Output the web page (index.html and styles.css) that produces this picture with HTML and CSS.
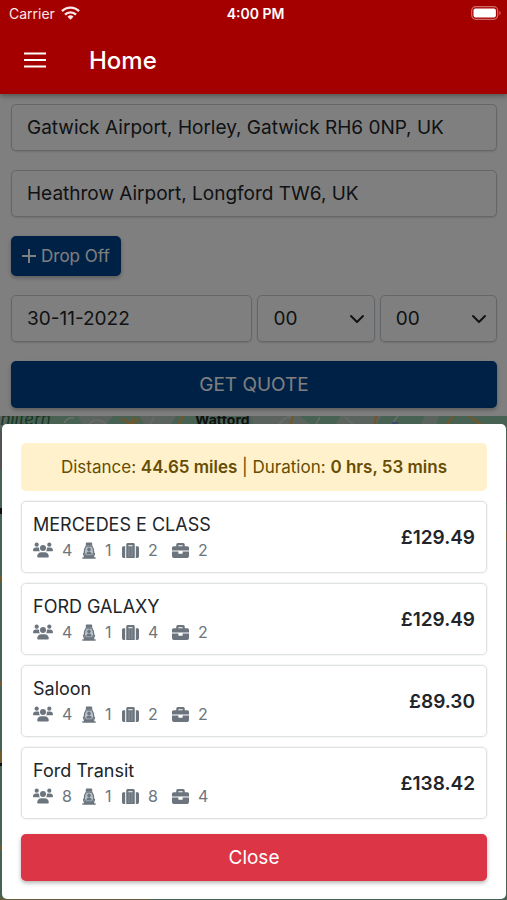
FILE: index.html
```html
<!DOCTYPE html>
<html lang="en">
<head>
<meta charset="utf-8">
<meta name="viewport" content="width=device-width, initial-scale=1">
<title>Home</title>
<link rel="stylesheet" href="styles.css">
</head>
<body>
<svg class="sprite" aria-hidden="true">
  <symbol id="users" viewBox="0 0 20 16">
    <circle cx="3.7" cy="2.7" r="2.1"/><circle cx="16.3" cy="2.7" r="2.1"/><circle cx="10" cy="6" r="3"/>
    <path d="M0 8.6C0 6.8 1.2 5.6 3 5.6h2c.5 0 .9.1 1.2.3C6 7.300 6.300 8.400 7.100 9.300H.7C.3 9.300 0 9 0 8.600z"/>
    <path d="M20 8.600c0-1.800-1.200-3-3-3h-2c-.5 0-.9.1-1.200.3.2 1.400-.1 2.500-.9 3.400h6.400c.4 0 .7-.3.7-.7z"/>
    <path d="M4.200 14.600c0-2.500 1.700-4.300 4.200-4.300h3.200c2.500 0 4.200 1.800 4.200 4.300 0 .5-.4.9-.9.9H5.100c-.5 0-.9-.4-.9-.9z"/>
  </symbol>
  <symbol id="seat" viewBox="0 0 14 17">
    <path d="M3.800 1.800c0-.8.5-1.300 1.200-1.300h4c.7 0 1.200.5 1.200 1.300v2H3.800z"/>
    <path d="M4.200 4.200h5.600c1.300 1.700 2 4 2 6.600l-1.600 3H3.800l-1.600-3c0-2.600.7-4.900 2-6.600z" fill="#b4c0ca" stroke="currentColor" stroke-width="1.200"/>
    <circle cx="7" cy="7.400" r="1.800"/>
    <path d="M4.300 12.400c0-2 1-3 2.700-3s2.700 1 2.700 3z"/>
    <path d="M1.500 11.500l1 3h9l1-3M.8 16h12.400" fill="none" stroke="currentColor" stroke-width="1.300" stroke-linecap="round"/>
  </symbol>
  <symbol id="suitcase" viewBox="0 0 512 512">
    <path d="M128 480h256V80c0-26.500-21.500-48-48-48H176c-26.500 0-48 21.500-48 48v400zm64-384h128v32H192V96zm320 80v256c0 26.500-21.500 48-48 48h-48V128h48c26.500 0 48 21.500 48 48zM96 480H48c-26.500 0-48-21.500-48-48V176c0-26.500 21.500-48 48-48h48v352z"/>
    <path d="M212 160v290M300 160v290" stroke="#a9b0b6" stroke-width="16"/>
  </symbol>
  <symbol id="briefcase" viewBox="0 0 512 512">
    <path d="M320 336c0 8.840-7.160 16-16 16h-96c-8.840 0-16-7.160-16-16v-48H0v144c0 25.600 22.400 48 48 48h416c25.600 0 48-22.400 48-48V288H320v48zm144-208h-80V80c0-25.600-22.400-48-48-48H176c-25.600 0-48 22.400-48 48v48H48c-25.600 0-48 22.400-48 48v80h512v-80c0-25.600-22.400-48-48-48zm-144 0H192V96h128v32z"/>
  </symbol>
  <symbol id="chevron" viewBox="0 0 16 16">
    <path d="M2 5l6 6 6-6" fill="none" stroke="currentColor" stroke-width="2" stroke-linecap="round" stroke-linejoin="round"/>
  </symbol>
</svg>

<header class="header">
  <div class="status">
    <span class="carrier">Carrier
      <svg width="19" height="14" viewBox="0 0 19 14" aria-hidden="true"><g fill="none" stroke="currentColor" stroke-width="2.400"><path d="M1 5.200a12 12 0 0 1 17 0"/><path d="M4 8.600a7.800 7.800 0 0 1 11 0"/></g><path d="M9.500 13.800l-3-3.100a4.300 4.300 0 0 1 6 0z" fill="currentColor"/></svg>
    </span>
    <time class="clock">4:00 PM</time>
    <svg class="battery" width="31" height="14" viewBox="0 0 31 14" aria-hidden="true"><rect x=".7" y=".7" width="26" height="12.600" rx="4" fill="none" stroke="#d06a6a" stroke-width="1.200"/><rect x="2.500" y="2.500" width="22.400" height="9" rx="2" fill="#fff"/><path d="M28.300 4.800c1.800.7 1.800 3.700 0 4.400z" fill="#d06a6a"/></svg>
  </div>
  <div class="toolbar">
    <button class="menu" type="button" aria-label="Menu"><svg width="24" height="16" viewBox="0 0 24 16"><path d="M1 1.500h22M1 8h22M1 14.500h22" stroke="currentColor" stroke-width="2.200"/></svg></button>
    <h1>Home</h1>
  </div>
</header>

<main class="stage">
  <form class="booking">
    <input class="field" type="text" aria-label="Pick up" value="Gatwick Airport, Horley, Gatwick RH6 0NP, UK">
    <input class="field" type="text" aria-label="Destination" value="Heathrow Airport, Longford TW6, UK">
    <button class="btn drop" type="button"><svg width="14" height="14" viewBox="0 0 14 14" aria-hidden="true"><path d="M7 0v14M0 7h14" stroke="currentColor" stroke-width="2"/></svg>Drop Off</button>
    <div class="when">
      <input class="field" type="text" aria-label="Date" value="30-11-2022">
      <div class="pick"><select class="field" aria-label="Hour"><option>00</option></select><svg width="16" height="16"><use href="#chevron"/></svg></div>
      <div class="pick"><select class="field" aria-label="Minute"><option>00</option></select><svg width="16" height="16"><use href="#chevron"/></svg></div>
    </div>
    <button class="btn quote" type="button">GET QUOTE</button>
  </form>
  <div class="map">
    <svg width="100%" height="100%" viewBox="0 0 507 484" preserveAspectRatio="xMidYMin slice" role="img" aria-label="Map">
      <rect width="507" height="484" fill="#8fc4a4"/>
      <g fill="#b4c6bb"><path d="M78 0h35l-8 10H82zM140 0h36l-6 10h-25zM250 0h50l12 10h-58zM340 0h42l-7 10h-40zM425 0h14l-3 10h-16z"/></g>
      <path d="M64 7q4-6 10-5M88 10q8-12 20 0M150 9l4-8M278 10q6-10 14-9M315 10l5-9M345 1l10 9M392 8l6-8" fill="none" stroke="#d0dad3" stroke-width="1.500"/>
      <path d="M121 2l10 6 9-5M130 10l4-9M178 10l5-10M290 10l3-10M374 10l2-10M446 10l8-11M469 0l14 10" fill="none" stroke="#dfae5c" stroke-width="2.500"/>
      <path d="M392 6h6v3h-6z" fill="#7c8fd8"/>
      <path d="M0 0h8l-4 12H0z" fill="#b5c9be"/>
      <path d="M0 15v38M507 45v40" stroke="#aaa0b0" stroke-width="6"/>
      <path d="M0 92v6M0 340v10" stroke="#222" stroke-width="4"/>
      <path d="M0 160v6M0 265v5M0 335v12M507 115v10M0 430v4" stroke="#e6b35c" stroke-width="5"/>
      <path d="M0 484h150" stroke="#c9bd80" stroke-width="5"/>
      <text class="region" x="-12" y="9">Chiltern</text>
      <text class="town" x="195" y="9">Watford</text>
    </svg>
  </div>
  <div class="backdrop"></div>

  <section class="sheet" role="dialog" aria-label="Quotes">
    <p class="summary">Distance: <b>44.65 miles</b> | Duration: <b>0 hrs, 53 mins</b></p>
    <ul class="cars">
      <li class="car">
        <div><h2>MERCEDES E CLASS</h2>
          <div class="specs"><svg class="i-users"><use href="#users"/></svg><span>4</span><svg class="i-seat"><use href="#seat"/></svg><span>1</span><svg class="i-case"><use href="#suitcase"/></svg><span>2</span><svg class="i-brief"><use href="#briefcase"/></svg><span>2</span></div></div>
        <strong>£129.49</strong>
      </li>
      <li class="car">
        <div><h2>FORD GALAXY</h2>
          <div class="specs"><svg class="i-users"><use href="#users"/></svg><span>4</span><svg class="i-seat"><use href="#seat"/></svg><span>1</span><svg class="i-case"><use href="#suitcase"/></svg><span>4</span><svg class="i-brief"><use href="#briefcase"/></svg><span>2</span></div></div>
        <strong>£129.49</strong>
      </li>
      <li class="car">
        <div><h2>Saloon</h2>
          <div class="specs"><svg class="i-users"><use href="#users"/></svg><span>4</span><svg class="i-seat"><use href="#seat"/></svg><span>1</span><svg class="i-case"><use href="#suitcase"/></svg><span>2</span><svg class="i-brief"><use href="#briefcase"/></svg><span>2</span></div></div>
        <strong>£89.30</strong>
      </li>
      <li class="car">
        <div><h2>Ford Transit</h2>
          <div class="specs"><svg class="i-users"><use href="#users"/></svg><span>8</span><svg class="i-seat"><use href="#seat"/></svg><span>1</span><svg class="i-case"><use href="#suitcase"/></svg><span>8</span><svg class="i-brief"><use href="#briefcase"/></svg><span>4</span></div></div>
        <strong>£138.42</strong>
      </li>
    </ul>
    <button class="btn close" type="button">Close</button>
  </section>
</main>
</body>
</html>
```
FILE: styles.css
```css
* { box-sizing: border-box; }

body {
  margin: 0;
  min-height: 100vh;
  display: flex;
  flex-direction: column;
  font-family: Inter, "Liberation Sans", sans-serif;
  font-size: 19px;
  color: #212529;
  background: #fff;
}

h1, h2, p, ul { margin: 0; padding: 0; }
button, input, select { font: inherit; color: inherit; }

.sprite { position: absolute; width: 0; height: 0; }

.header {
  position: relative;
  z-index: 1;
  color: #fff;
  background: #a50000;
  box-shadow: 0 2px 5px rgba(0, 0, 0, .35);
}

.status {
  display: grid;
  grid-template-columns: 1fr auto 1fr;
  align-items: center;
  height: 26px;
  padding: 0 5px 0 9px;
  font-size: 14px;
}
.carrier { display: flex; align-items: center; gap: 6px; color: #fbe9e9; }
.clock { font-weight: 600; }
.battery { justify-self: end; }

.toolbar {
  display: flex;
  align-items: center;
  gap: 42px;
  height: 68px;
  padding: 0 23px;
}
.menu {
  display: flex;
  padding: 0;
  border: 0;
  background: none;
}
h1 { font-size: 24px; font-weight: 500; }

.stage {
  position: relative;
  flex: 1;
  display: flex;
  flex-direction: column;
}

.booking {
  display: flex;
  flex-direction: column;
  align-items: flex-start;
  gap: 19px;
  padding: 10px 10px 8px 11px;
}

.field {
  width: 100%;
  min-width: 0;
  height: 47px;
  padding: 0 15px;
  border: 1px solid #c8ced4;
  border-radius: 5px;
  background: #fff;
  box-shadow: 0 1px 2px rgba(0, 0, 0, .12);
  appearance: none;
}

.btn {
  display: flex;
  align-items: center;
  justify-content: center;
  width: 100%;
  height: 47px;
  border: 0;
  border-radius: 5px;
  color: #fff;
  box-shadow: 0 2px 4px rgba(0, 0, 0, .3);
}
.drop, .quote { background: #00438c; }
.drop {
  width: auto;
  height: 40px;
  gap: 5px;
  padding: 0 11px;
  font-size: 17px;
}

.when {
  display: grid;
  grid-template-columns: 35fr 17fr 17fr;
  gap: 5px;
  width: 100%;
}
.pick { display: grid; align-items: center; }
.pick > * { grid-area: 1 / 1; }
.pick svg { justify-self: end; margin-right: 10px; pointer-events: none; }

.map { flex: 1; min-height: 483px; overflow: hidden; }
.map svg { display: block; }
.region { font: italic 17px Inter, sans-serif; fill: #35694a; }
.town { font: bold 14px Inter, sans-serif; fill: #222; }

.backdrop {
  position: absolute;
  inset: 0;
  background: rgba(0, 0, 0, .5);
}

.sheet {
  position: absolute;
  left: 2px;
  right: 1px;
  bottom: 1px;
  padding: 19px 19px 18px;
  border-radius: 5px;
  background: #fff;
}

.summary {
  padding: 12px;
  border-radius: 5px;
  font-size: 17px;
  line-height: 24px;
  text-align: center;
  color: #664d03;
  background: #fff1cc;
}
.summary b { font-weight: 600; }

.cars {
  display: grid;
  gap: 10px;
  margin: 10px 0 15px;
  list-style: none;
}
.car {
  display: flex;
  align-items: center;
  justify-content: space-between;
  height: 72px;
  padding: 0 11px;
  border: 1px solid #dfe2e5;
  border-radius: 5px;
  box-shadow: 0 0 1px 1px #f4f5f6;
}
.car strong { font-weight: 600; }
h2 { font-size: 18px; font-weight: 400; line-height: 26px; }

.specs {
  display: grid;
  grid-template-columns: 29px 20px 23px 17px 26px 24px 26px auto;
  align-items: center;
  font-size: 16px;
  line-height: 24px;
  color: #6c757d;
}
.specs svg { fill: currentColor; }
.i-users { width: 20px; height: 16px; }
.i-seat { width: 14px; height: 17px; }
.i-case, .i-brief { width: 17px; height: 17px; }

.close { background: #dc3545; }
```
